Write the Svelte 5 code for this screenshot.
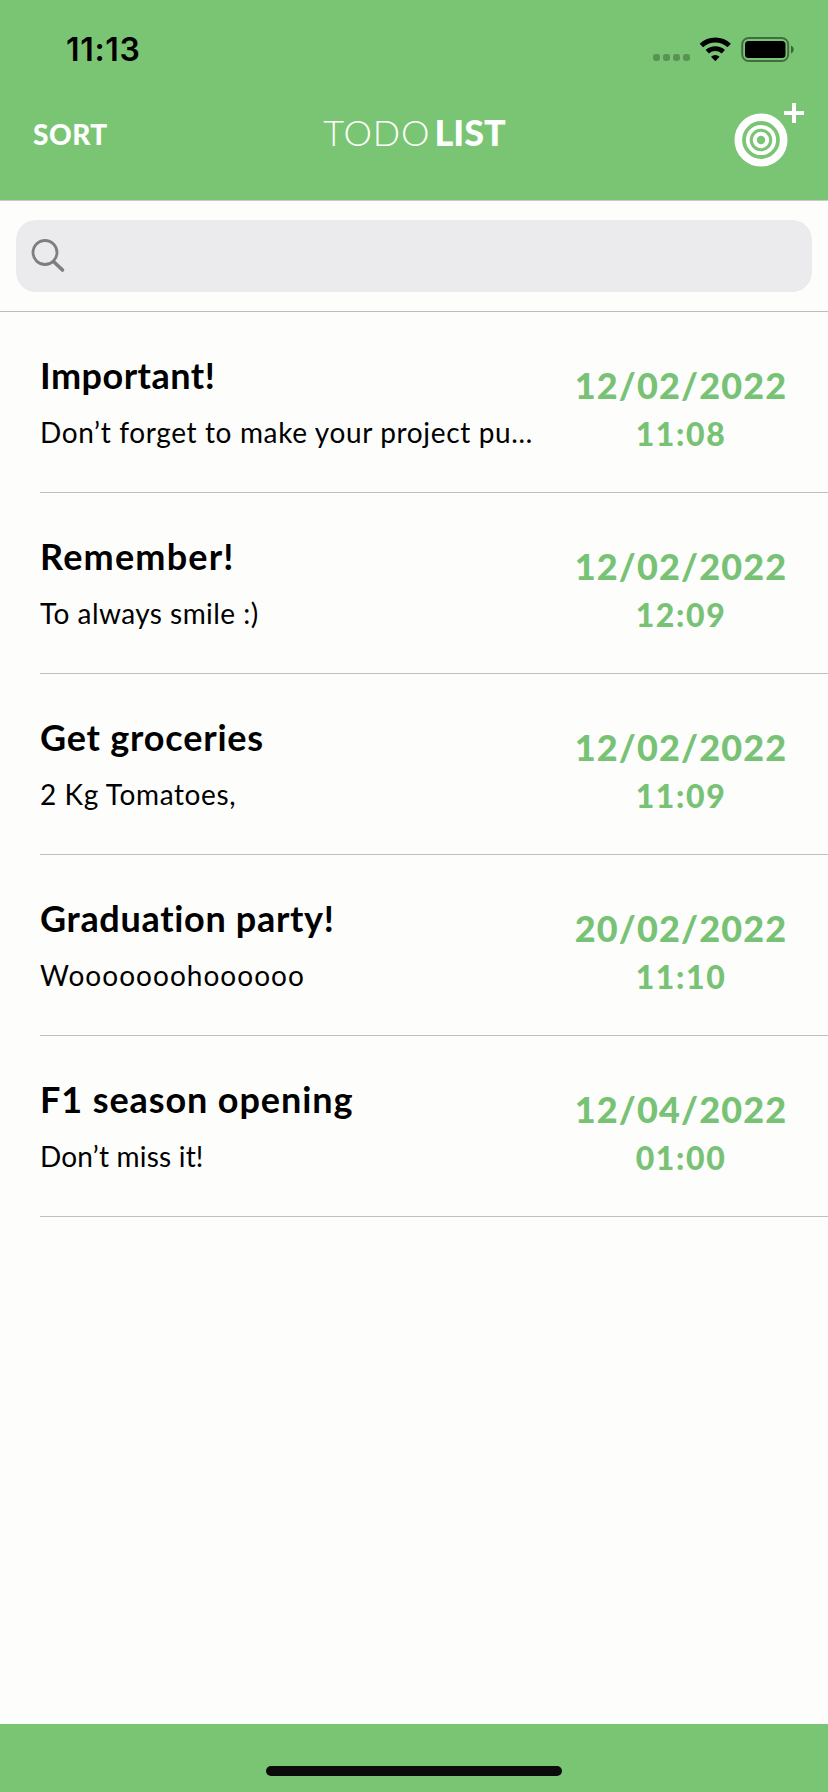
<script>
  const todos = [
    { title: 'Important!', ts: 0.5, note: 'Don’t forget to make your project pu…', ns: 0.64, date: '12/02/2022', time: '11:08' },
    { title: 'Remember!', ts: 1.2, note: 'To always smile :)', ns: 0.45, date: '12/02/2022', time: '12:09' },
    { title: 'Get groceries', ts: 0.8, note: '2 Kg Tomatoes,', ns: 0.6, date: '12/02/2022', time: '11:09' },
    { title: 'Graduation party!', ts: 0.68, note: 'Wooooooohoooooo', ns: 1.03, date: '20/02/2022', time: '11:10' },
    { title: 'F1 season opening', ts: 0.9, note: 'Don’t miss it!', ns: 0.2, date: '12/04/2022', time: '01:00' }
  ];
</script>

<div class="screen">
  <header>
    <div class="status">
      <span class="clock">11:13</span>
      <svg class="indicators" width="144" height="28" viewBox="0 0 144 28">
        <g fill="#000" fill-opacity=".26">
          <rect x="1" y="18" width="7" height="7" rx="2.4" />
          <rect x="11" y="18" width="7" height="7" rx="2.4" />
          <rect x="21" y="18" width="7" height="7" rx="2.4" />
          <rect x="31" y="18" width="7" height="7" rx="2.4" />
        </g>
        <g fill="none" stroke="#000" stroke-width="4.9">
          <path d="M49.400 9.600a20 20 0 0 1 27.800 0" />
          <path d="M55.300 15.800a11.800 11.800 0 0 1 16 0" />
        </g>
        <path d="M63.300 25.200l-4.300-4.400a6.300 6.300 0 0 1 8.600 0z" />
        <rect x="90.200" y="2" width="46" height="23" rx="6.500" fill="none" stroke="#000" stroke-opacity=".45" stroke-width="2" />
        <rect x="93" y="5" width="40.500" height="17" rx="3.500" />
        <path d="M139 9.500c3.600 1.400 3.600 6.600 0 8z" fill-opacity=".5" />
      </svg>
    </div>
    <nav>
      <span class="sort">SORT</span>
      <h1><span class="thin">TODO</span><span class="heavy">LIST</span></h1>
      <svg class="add" width="72" height="66" viewBox="0 0 72 66" fill="none" stroke="#fff">
        <circle cx="27" cy="38" r="22.700" stroke-width="7.600" />
        <circle cx="27" cy="38" r="13.200" stroke-width="3.800" />
        <circle cx="27" cy="38" r="6.200" stroke-width="4" />
        <path d="M50 11h20M60 1v20" stroke-width="4" />
      </svg>
    </nav>
  </header>

  <div class="searchbar">
    <div class="field">
      <svg width="36" height="36" viewBox="0 0 36 36" fill="none" stroke="#7e7e80" stroke-width="2.800">
        <circle cx="15" cy="15.500" r="12" />
        <path d="M23.500 24.500l9 8.500" stroke-width="3.600" stroke-linecap="round" />
      </svg>
    </div>
  </div>

  <ul>
    {#each todos as todo}
      <li>
        <div class="text">
          <h2 style="letter-spacing: {todo.ts}px">{todo.title}</h2>
          <p style="letter-spacing: {todo.ns}px">{todo.note}</p>
        </div>
        <div class="when">
          <span class="date">{todo.date}</span>
          <span class="time">{todo.time}</span>
        </div>
      </li>
    {/each}
  </ul>

  <footer><div class="home"></div></footer>
</div>

<style>
  :global(body) { margin: 0; }
  .screen {
    display: flex;
    flex-direction: column;
    width: 828px;
    height: 1792px;
    overflow: hidden;
    background: #fdfdfc;
    color: #000;
    font-family: Lato, "Open Sans", sans-serif;
  }
  header {
    box-sizing: border-box;
    height: 201px;
    flex: none;
    background: #7ac574;
    border-bottom: 1px solid #ccc6d0;
  }
  .status {
    display: flex;
    justify-content: space-between;
    align-items: flex-start;
    height: 100px;
    padding: 0 32px 0 66px;
    box-sizing: border-box;
  }
  .clock {
    margin-top: 30px;
    font: 600 32px/40px Inter, sans-serif;
    letter-spacing: 0.700px;
  }
  .indicators { margin-top: 36px; }
  nav {
    display: grid;
    grid-template-columns: 191px 1fr 200px;
    height: 66px;
    padding: 2px 22px 0 32px;
    color: #fff;
  }
  .sort {
    margin: 14px 0 0 1px;
    font-size: 28px;
    line-height: 36px;
    font-weight: 900;
    letter-spacing: 0.500px;
  }
  h1 {
    display: flex;
    justify-content: center;
    margin: 8px 0 0;
    font-size: 36px;
    line-height: 44px;
    white-space: nowrap;
  }
  .thin {
    margin-right: 4px;
    font-weight: 300;
    letter-spacing: 0.900px;
  }
  .heavy { font-weight: 900; }
  .add { justify-self: end; }
  .searchbar {
    flex: none;
    box-sizing: border-box;
    height: 111px;
    padding: 19px 16px;
    border-bottom: 1px solid #bcbcc0;
  }
  .field {
    display: flex;
    align-items: center;
    box-sizing: border-box;
    height: 72px;
    padding: 0 14px 2px;
    border-radius: 20px;
    background: #ebebed;
  }
  ul {
    flex: 1;
    margin: 0;
    padding: 0 0 0 40px;
    list-style: none;
  }
  li {
    display: flex;
    justify-content: space-between;
    box-sizing: border-box;
    height: 181px;
    padding-right: 39px;
    border-bottom: 1px solid #bfbfc6;
  }
  .text { padding-top: 41px; }
  h2 {
    margin: 0;
    font-size: 36px;
    line-height: 44px;
    font-weight: 700;
    white-space: nowrap;
  }
  p {
    margin: 18px 0 0;
    font-size: 28px;
    line-height: 34px;
    font-weight: 400;
    white-space: nowrap;
  }
  .when {
    display: flex;
    flex-direction: column;
    align-items: center;
    width: 216px;
    padding-top: 51px;
    color: #77c274;
    font-weight: 900;
    white-space: nowrap;
  }
  .date { font-size: 36px; line-height: 44px; letter-spacing: 1.150px; }
  .time { margin-top: 8px; font-size: 32px; line-height: 38px; letter-spacing: 1.600px; }
  footer {
    display: flex;
    justify-content: center;
    align-items: flex-end;
    flex: none;
    box-sizing: border-box;
    height: 68px;
    padding-bottom: 16px;
    background: #7ac574;
  }
  .home {
    width: 296px;
    height: 10px;
    border-radius: 5px;
    background: #0b0b0b;
  }
</style>
